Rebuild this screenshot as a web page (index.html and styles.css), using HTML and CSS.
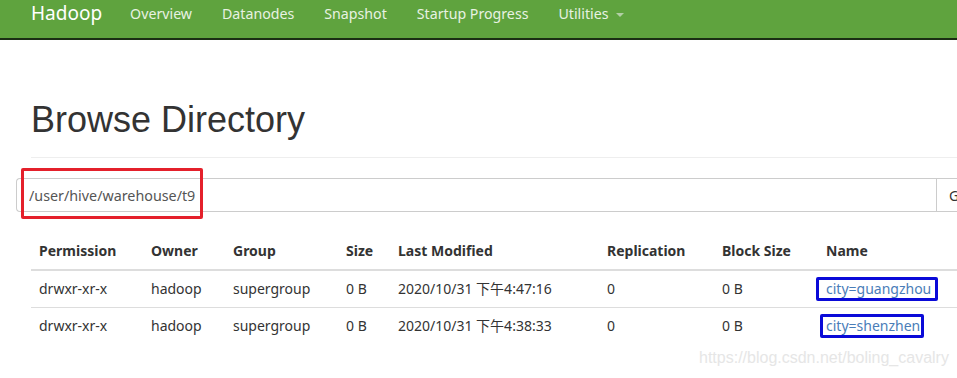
FILE: index.html
```html
<!DOCTYPE html>
<html>
<head>
  <meta charset="UTF-8">
  <link rel="stylesheet" href="styles.css">
</head>
<body>
  <header class="navbar">
    <a class="brand" href="#">Hadoop</a>
    <nav class="nav">
      <a href="#">Overview</a>
      <a href="#">Datanodes</a>
      <a href="#">Snapshot</a>
      <a href="#">Startup Progress</a>
      <a href="#" class="dropdown">Utilities <span class="caret"></span></a>
    </nav>
  </header>

  <div class="container">
    <h1>Browse Directory</h1>
    <hr>

    <div class="input-group">
      <input type="text" class="path-input" value="/user/hive/warehouse/t9">
      <button class="go-btn">Go!</button>
      <div class="mark-red"></div>
    </div>

    <table class="listing">
      <colgroup>
        <col style="width: 112px">
        <col style="width: 82px">
        <col style="width: 113px">
        <col style="width: 52px">
        <col style="width: 209px">
        <col style="width: 115px">
        <col style="width: 104px">
        <col>
      </colgroup>
      <thead>
        <tr>
          <th>Permission</th>
          <th>Owner</th>
          <th>Group</th>
          <th>Size</th>
          <th>Last Modified</th>
          <th>Replication</th>
          <th>Block Size</th>
          <th>Name</th>
        </tr>
      </thead>
      <tbody>
        <tr>
          <td>drwxr-xr-x</td>
          <td>hadoop</td>
          <td>supergroup</td>
          <td>0 B</td>
          <td>2020/10/31 下午4:47:16</td>
          <td>0</td>
          <td>0 B</td>
          <td><a href="#" class="mark-blue first">city=guangzhou</a></td>
        </tr>
        <tr>
          <td>drwxr-xr-x</td>
          <td>hadoop</td>
          <td>supergroup</td>
          <td>0 B</td>
          <td>2020/10/31 下午4:38:33</td>
          <td>0</td>
          <td>0 B</td>
          <td><a href="#" class="mark-blue second">city=shenzhen</a></td>
        </tr>
      </tbody>
    </table>
  </div>

  <div class="watermark">https://blog.csdn.net/boling_cavalry</div>
</body>
</html>
```

FILE: styles.css
```css
:root {
  --nav-green: #5fa33e;
  --text-primary: #333;
  --text-input: #555;
  --link-color: #4a7db8;
  --border-color: #ddd;
}

html, body {
  margin: 0;
  height: 100%;
  overflow: hidden;
}

body {
  font-family: "Noto Sans", "Noto Sans CJK SC", sans-serif;
  font-size: 14px;
  color: var(--text-primary);
  background: #fff;
  position: relative;
}

.navbar {
  height: 38px;
  background: var(--nav-green);
  border-bottom: 2px solid #1b2e14;
  display: flex;
  align-items: flex-start;
  padding-left: 31px;
}

.brand {
  font-size: 19px;
  line-height: 20px;
  padding-top: 3px;
  color: #fff;
  text-decoration: none;
  margin-right: 13px;
}

.nav {
  display: flex;
}

.nav a {
  font-size: 14.2px;
  line-height: 20px;
  padding: 4px 15px 0;
  color: #e8f2e2;
  text-decoration: none;
}

.caret {
  display: inline-block;
  width: 0;
  height: 0;
  margin-left: 4px;
  vertical-align: middle;
  border-top: 4px solid #b3cfa5;
  border-left: 4px solid transparent;
  border-right: 4px solid transparent;
}

.container {
  padding-left: 31px;
}

h1 {
  font-family: "Liberation Sans", Arial, sans-serif;
  font-size: 36px;
  font-weight: 400;
  line-height: 40px;
  margin: 60px 0 0;
  color: #333;
}

hr {
  border: 0;
  border-top: 1px solid #eee;
  margin: 17px 0 20px;
}

.input-group {
  position: relative;
  display: flex;
  margin-left: -15px;
  width: 1000px;
}

.path-input {
  width: 920px;
  height: 34px;
  box-sizing: border-box;
  padding: 6px 12px;
  border: 1px solid #ccc;
  border-right: 0;
  border-radius: 4px 0 0 4px;
  font-family: "Noto Sans", "Noto Sans CJK SC", sans-serif;
  font-size: 14.3px;
  color: var(--text-input);
  outline: none;
}

.go-btn {
  height: 34px;
  padding: 6px 12px;
  border: 1px solid #ccc;
  background: #fff;
  font-family: "Noto Sans", sans-serif;
  font-size: 14px;
  color: #333;
}

.mark-red {
  position: absolute;
  left: 5px;
  top: -10px;
  width: 176px;
  height: 45px;
  border: 3px solid #e4202b;
  border-radius: 2px;
}

.listing {
  border-collapse: collapse;
  table-layout: fixed;
  width: 926px;
  margin-top: 21px;
}

.listing th,
.listing td {
  text-align: left;
  padding: 8px;
  line-height: 20px;
  white-space: nowrap;
}

.listing th {
  font-weight: 700;
  border-bottom: 2px solid var(--border-color);
}

.listing td {
  border-top: 1px solid var(--border-color);
}

.listing a {
  color: var(--link-color);
  text-decoration: none;
}

.mark-blue {
  display: inline-block;
  border: 3px solid #0a0ad8;
  border-radius: 2px;
  line-height: 18px;
  margin-top: -2px;
  margin-bottom: -2px;
  vertical-align: top;
}

.mark-blue.first {
  margin-left: -10px;
  padding: 0 4px 0 7px;
}

.mark-blue.second {
  margin-left: -6px;
  padding: 0 1px 0 3px;
}

.watermark {
  position: absolute;
  left: 699px;
  top: 349px;
  font-family: "Liberation Sans", Arial, sans-serif;
  font-size: 16px;
  color: #e6e6e6;
}
```
